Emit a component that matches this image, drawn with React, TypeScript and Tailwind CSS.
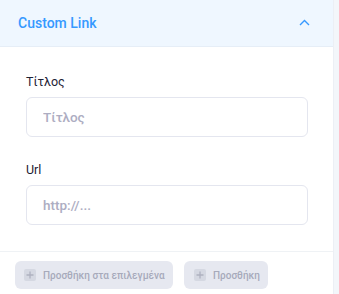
export default function App() {
  return (
    <div className="flex w-[339px] h-[294px] bg-[#f3f6fa] font-['Roboto',sans-serif] overflow-hidden">
      <div className="w-[334px] flex-shrink-0 bg-white border-r border-[#eceff5] flex flex-col">
        {/* Header */}
        <div className="h-[47px] flex-shrink-0 bg-[#eff7ff] border-b border-[#e6eef7] flex items-center justify-between pl-[18px] pr-[23px]">
          <span className="text-[14px] font-medium text-[#3699ff]">Custom Link</span>
          <svg width="11" height="7" viewBox="0 0 11 7" fill="none" className="mt-[-1px]">
            <path d="M1 6 L5.5 1.5 L10 6" stroke="#3699ff" strokeWidth="1.4" />
          </svg>
        </div>

        {/* Body */}
        <div className="flex flex-col pl-[26px] pr-[25px] pt-[25px] pb-[26px] border-b border-[#eff2f5]">
          <label className="text-[12.5px] leading-5 text-[#1e2235]">Τίτλος</label>
          <input
            placeholder="Τίτλος"
            className="mt-[5px] h-10 w-full rounded-md border border-[#e4e6ef] px-[16px] text-[13.5px] font-medium placeholder:text-[#adadc2] outline-none"
          />
          <label className="mt-[23px] text-[12.5px] leading-5 text-[#1e2235]">Url</label>
          <input
            placeholder="http://..."
            className="mt-[5px] h-10 w-full rounded-md border border-[#e4e6ef] px-[16px] text-[13.5px] font-medium placeholder:text-[#adadc2] outline-none"
          />
        </div>

        {/* Footer */}
        <div className="flex items-start gap-[11px] pl-[15px] pt-[9px]">
          <button className="h-[28px] w-[158px] flex items-center gap-[7px] rounded-md bg-[#e6e8f0] pl-[9px] text-[10px] font-medium text-[#a7aabb] whitespace-nowrap">
            <span className="w-[12px] h-[12px] rounded-[2px] bg-[#d5d8e2] flex items-center justify-center">
              <svg width="8" height="8" viewBox="0 0 8 8"><path d="M4 0.5V7.5M0.5 4H7.5" stroke="#aeb1c0" strokeWidth="1.3" /></svg>
            </span>
            Προσθήκη στα επιλεγμένα
          </button>
          <button className="h-[28px] w-[84px] flex items-center gap-[7px] rounded-md bg-[#e6e8f0] pl-[10px] text-[10px] font-medium text-[#a7aabb] whitespace-nowrap">
            <span className="w-[12px] h-[12px] rounded-[2px] bg-[#d5d8e2] flex items-center justify-center">
              <svg width="8" height="8" viewBox="0 0 8 8"><path d="M4 0.5V7.5M0.5 4H7.5" stroke="#aeb1c0" strokeWidth="1.3" /></svg>
            </span>
            Προσθήκη
          </button>
        </div>
      </div>
    </div>
  )
}
